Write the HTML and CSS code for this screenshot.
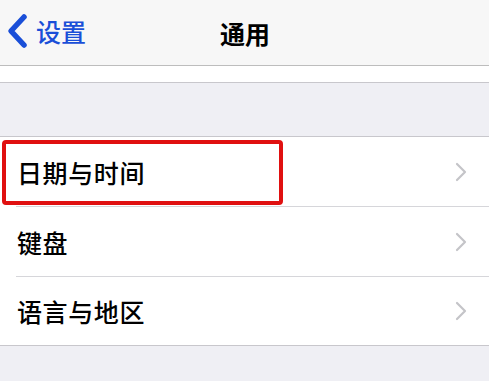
FILE: index.html
```html
<!DOCTYPE html>
<html lang="zh">
<head>
<meta charset="utf-8">
<link rel="stylesheet" href="styles.css">
</head>
<body>
<div class="nav">
  <div class="back">
    <svg class="back-icon" width="24" height="36" viewBox="0 0 24 36"><path d="M19 4 L6 18 L19 32" fill="none" stroke="#1a4fd8" stroke-width="5.5" stroke-linecap="round" stroke-linejoin="round"/></svg>
    <span class="back-text">设置</span>
  </div>
  <div class="title">通用</div>
</div>
<div class="strip"></div>
<div class="gap"></div>
<div class="group">
  <div class="row first">
    <span class="label">日期与时间</span>
    <svg class="chev" width="12" height="20" viewBox="0 0 12 20"><path d="M2 2 L10 10 L2 18" fill="none" stroke="#c4c4c8" stroke-width="2.2" stroke-linecap="round" stroke-linejoin="round"/></svg>
    <div class="highlight"></div>
  </div>
  <div class="row">
    <span class="label">键盘</span>
    <svg class="chev" width="12" height="20" viewBox="0 0 12 20"><path d="M2 2 L10 10 L2 18" fill="none" stroke="#c4c4c8" stroke-width="2.2" stroke-linecap="round" stroke-linejoin="round"/></svg>
  </div>
  <div class="row last">
    <span class="label">语言与地区</span>
    <svg class="chev" width="12" height="20" viewBox="0 0 12 20"><path d="M2 2 L10 10 L2 18" fill="none" stroke="#c4c4c8" stroke-width="2.2" stroke-linecap="round" stroke-linejoin="round"/></svg>
  </div>
</div>
</body>
</html>
```

FILE: styles.css
```css
html, body {
  margin: 0;
  padding: 0;
  background: #efeff4;
  font-family: "Noto Sans CJK SC", "Noto Sans", sans-serif;
  width: 489px;
  height: 381px;
  overflow: hidden;
}
.nav {
  height: 65px;
  background: #f7f7f7;
  border-bottom: 1px solid #bdbdbd;
  position: relative;
  display: flex;
  align-items: center;
  justify-content: center;
}
.back {
  position: absolute;
  left: 5px;
  top: 13px;
  display: flex;
  align-items: center;
  gap: 7px;
}
.back-icon {
  display: block;
}
.back-text {
  color: #1a4fd8;
  font-size: 25px;
  line-height: 36px;
  font-weight: 500;
}
.title {
  font-size: 25px;
  font-weight: 600;
  color: #000;
  margin-left: 1px;
}
.strip {
  height: 16px;
  background: #ffffff;
  border-bottom: 1px solid #c8c7cc;
}
.gap {
  height: 53px;
  border-bottom: 1px solid #c8c7cc;
}
.group {
  background: #fff;
  border-bottom: 1px solid #c8c7cc;
}
.row {
  position: relative;
  height: 69px;
  margin-left: 16px;
  padding-right: 22px;
  display: flex;
  align-items: center;
  justify-content: space-between;
  border-bottom: 1px solid #d6d6da;
}
.row.last {
  border-bottom: none;
  height: 68px;
}
.label {
  font-size: 25px;
  font-weight: 500;
  color: #000;
  margin-left: 1px;
  letter-spacing: 0.6px;
}
.chev {
  display: block;
}
.highlight {
  position: absolute;
  left: -14px;
  top: 3px;
  width: 273px;
  height: 57px;
  border: 4px solid #e01010;
  border-radius: 4px;
}
```
